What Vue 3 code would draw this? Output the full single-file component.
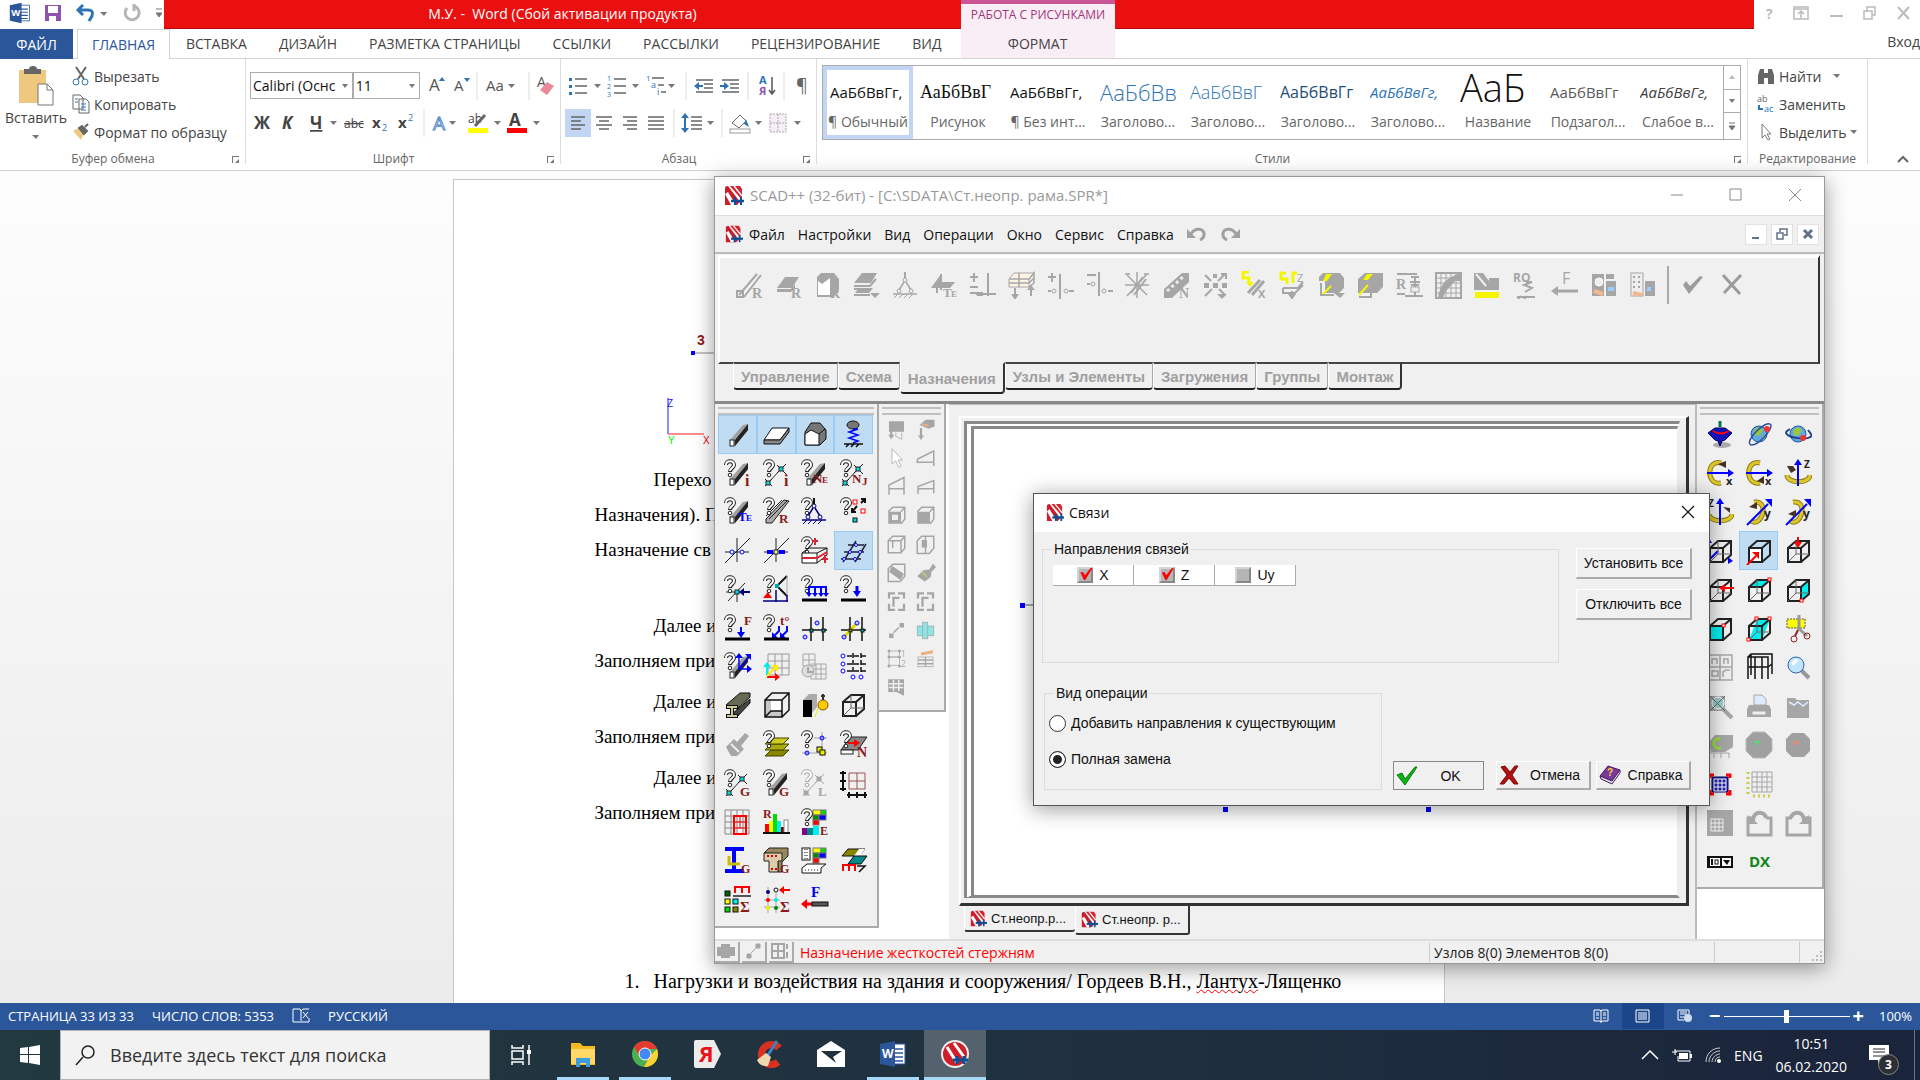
<script setup>
import { ref } from 'vue'

// small svg helpers, every icon is a string of svg shapes
const G = '#a6a6a6'
const B = '#0000ff'
const R = '#8b1a1a'
const line = (d, c = '#222', w = 1, extra = '') =>
  `<path d="${d}" fill="none" stroke="${c}" stroke-width="${w}" ${extra}/>`
const fill = (d, c, stroke = 'none') => `<path d="${d}" fill="${c}" stroke="${stroke}"/>`
const box = (x, y, w, h, c, stroke = 'none') =>
  `<rect x="${x}" y="${y}" width="${w}" height="${h}" fill="${c}" stroke="${stroke}"/>`
const dot = (x, y, r, c, stroke = 'none') =>
  `<circle cx="${x}" cy="${y}" r="${r}" fill="${c}" stroke="${stroke}"/>`
const txt = (s, x, y, c, size = 14, extra = '') =>
  `<text x="${x}" y="${y}" fill="${c}" font-size="${size}" ${extra}>${s}</text>`
const letter = (s, x = 17, y = 27, c = R, size = 13) =>
  txt(s, x, y, c, size, 'font-family="Liberation Serif, serif" font-weight="bold"')
const caret = (x, y = 12) => fill(`M${x - 3} ${y}h7l-3.5 4z`, '#777')

const ask = (c = '#222') =>
  line('M3 6c0-5 8-5 8 0 0 3-4 3-4 7', c, 4) +
  line('M3 6c0-5 8-5 8 0 0 3-4 3-4 6', '#fff', 2) +
  dot(7, 16, 1.8, '#fff', c)
const beam = (c = '#222') =>
  fill('M7 20L20 5l5-1v6L12 26H7z', c === G ? G : '#a0a0a0') +
  fill('M12 20L25 4v6L12 26z', c) +
  box(7, 20, 4, 6, '#fff', c)
const nodes = (c = '#222', f = '#00e0e0') =>
  line('M6 24L19 10M15 6l9 9M24 5l-9 9M3 20l7 7M10 20l-7 7', c) + box(17, 8, 4, 4, f, c) + box(4, 22, 4, 4, f, c)
const down = (x, y1, y2, c = B, w = 2) =>
  line(`M${x} ${y1}V${y2 - 3}`, c, w) + fill(`M${x - 4} ${y2 - 5}h8l-4 6z`, c)
const cube = (faces = '', c = '#222', hidden = true) =>
  faces + line('M4 11h13v14H4zM4 11l8-7h13v14l-8 7M17 11l8-7', c, 2) +
  (hidden ? line('M12 4v13h13M12 17l-8 8', '#666') : '')
const grid = (x, y, n, s, c) => {
  let d = ''
  for (let i = 0; i <= n; i++) {
    d += `M${x + i * s} ${y}v${n * s}M${x} ${y + i * s}h${n * s}`
  }
  return line(d, c)
}
const support = (c, d) =>
  line('M14 1v6', d, 2) + dot(14, 9, 2, '#eee', c) + line('M13 11l-5 8M15 11l5 8M2 23h24', c, 1.5) +
  dot(8, 20, 2, '#eee', c) + dot(20, 20, 2, '#eee', c) +
  line('M3 27l4-4M8 27l4-4M13 27l4-4M18 27l4-4', c)
const ground = line('M2 25h25', '#000', 3)
const blocks =
  box(13, 2, 8, 5, '#ff0', '#777') + box(21, 2, 5, 5, '#0d0', '#777') + box(13, 7, 6, 5, '#080', '#777') +
  box(19, 7, 7, 5, B, '#777') + box(13, 12, 6, 5, 'red', '#777')
const scad =
  fill('M1 3q0-2 3-2l12 16-3 3H1z', '#c91f2c') + fill('M6 1h10l2 3v11z', '#d8232f') +
  fill('M1 9l3-2 8 13H7z', '#fff') + line('M10 1l8 10', '#fff', 1.5) +
  line('M7 16h14', '#0c4f94', 2.5) + line('M11 12v8M17 12v8', '#0c4f94', 2)
const door = fill('M3 9h9v17H3z', '#000') + fill('M3 9l6-6h8l-5 6zM12 9l5-6v13l-5 6z', '#aaa')

const left = [
  beam(),
  fill('M2 20L10 8h17l-9 12z', '#fff', '#111') + fill('M2 20h16l9-12v4l-9 12H2z', '#888', '#111'),
  fill('M5 12l6-9h9l6 7v9l-6 6H5z', '#777', '#111') + fill('M5 14l6-4 8 4v11H5z', '#fff', '#111') + line('M19 14l6-5', '#111'),
  `<ellipse cx="14" cy="5" rx="6" ry="4" fill="#777" stroke="#111"/>` + line('M14 9h5l-9 3 9 3-9 3 9 3-5 2', B, 1.5) + line('M5 24h19M7 27l3-3M12 27l3-3M17 27l3-3', '#111', 1.5),
  beam() + ask() + letter('i', 22, 27, R, 16),
  nodes() + ask() + letter('i', 22, 27, R, 16),
  beam() + ask() + letter('N', 13, 24) + letter('E', 22, 24, R, 9),
  nodes() + ask() + letter('N', 13, 24) + letter('J', 23, 26, R, 11),
  beam() + ask() + letter('T', 15, 24, B) + letter('E', 23, 24, B, 9),
  fill('M4 22L22 3l5 1L10 26H4z', '#aaa', '#222') + line('M7 22L25 4M4 19L20 3', '#222') + ask() + letter('R', 17, 26),
  ask() + support('#000080', '#111'),
  ask() + box(14, 3, 4, 4, '#fff', 'red') + box(22, 12, 4, 4, '#fff', 'red') + box(14, 21, 4, 4, '#0dd', '#111') + line('M18 9l-5 6M22 6l4-4M13 11v4h4M22 2h4v4', '#111', 2),
  line('M2 27L27 2M14 2v24M2 16h24') + dot(9, 16, 2, '#fff', B) + dot(19, 16, 2, '#fff', B),
  line('M2 27L27 2M14 2v24M2 16h24') + box(5, 14, 6, 4, B) + box(17, 14, 6, 4, B) + box(12, 14, 4, 4, '#ff8', '#222'),
  ask() + fill('M2 17h15v10H2z', '#fff', '#111') + line('M2 17l7-5h18l-10 5M17 27l10-8v-7', '#111') + line('M2 22h15l10-6', '#d23', 2) + line('M15 2v7M12 5h6M25 19v8M22 23h6', '#d23', 2),
  line('M9 9h16M5 16h20M2 23h20M4 26L17 5M16 26L27 8', '#223', 1.5) + dot(17, 9, 1.5, '#fff', B) + dot(11, 16, 1.5, '#fff', B) + dot(21, 16, 1.5, '#fff', B) + dot(5, 23, 1.5, '#fff', B) + dot(16, 23, 1.5, '#fff', B),
  line('M3 17h14M5 26L22 8M14 18v9') + ask() + box(12, 15, 4, 4, '#0dd', '#222') + line('M19 17h8', '#000080', 2) + fill('M16 17l5-4v8z', '#000080'),
  line('M25 1L15 11l10 10', '#111', 2) + line('M25 1v20', G) + ask() + box(13, 9, 4, 4, '#0aa') + fill('M1 23h9l-4-6z', 'red') + line('M1 26h25M14 15v12M25 20v7', '#000080', 1.5),
  ask() + line('M9 19v-7h17v7M15 12v7M21 12v7', B, 2) + fill('M6 18h6l-3 4zM12 18h6l-3 4zM18 18h6l-3 4zM23 18h6l-3 4z', B) + ground,
  ask() + down(18, 11, 21, B, 3) + ground,
  ask() + letter('F', 21, 11) + down(18, 13, 23) + ground,
  ask() + letter('t°', 18, 11) + line('M17 12v5l-5 5M25 12v5l-5 5', B, 2) + fill('M10 18v6h6zM18 18v6h6z', B) + ground,
  line('M11 3v24M23 3v24M2 16h25', '#111', 1.5) + box(10, 15, 3, 3, '#0aa', '#111') + box(22, 15, 3, 3, '#0aa', '#111') + dot(5, 23, 2, '#ccf', B) + dot(17, 9, 2, '#ccf', B),
  line('M11 3v24M23 3v24M2 16h25', '#111', 1.5) + line('M5 23L18 9', '#dd0', 3) + box(10, 15, 3, 3, '#880', '#111') + box(22, 15, 3, 3, '#0aa', '#111') + dot(5, 23, 2, '#ccf', B) + dot(18, 9, 2, '#ccf', B),
  beam() + ask() + line('M16 4v13h10M16 17L27 4', B, 1.5) + fill('M12 6l4-5 4 5zM24 13l5 4-5 4zM22 2h6v6z', B),
  grid(6, 2, 3, 7, '#999') + line('M5 13v11', '#0ee', 2) + line('M5 25h9', 'red', 2) + line('M5 24l8-8', '#fe0', 2) + fill('M1 15l4-5 4 5z', '#0ee') + fill('M13 21l5 4-5 4z', 'red') + fill('M9 13h7v7z', '#fe0'),
  grid(3, 2, 2, 6, G) + grid(11, 12, 3, 5, G) + dot(8, 19, 6, '#ddd', G) + line('M8 15v5h5', G, 2),
  line('M8 4h20M8 12h20M8 19h20M14 1v20M22 1v20', '#111', 1.5, 'stroke-dasharray="5 2"') + dot(4, 4, 2, '#fff', B) + dot(4, 12, 2, '#fff', B) + dot(4, 19, 2, '#fff', B) + dot(14, 25, 2, '#fff', B) + dot(22, 25, 2, '#fff', B),
  fill('M3 14L17 2h10v4L14 18z', '#666a55', '#111') + fill('M10 22l17-14v4L14 26z', '#444', '#111') + line('M3 16h12M3 25h12M9 16v9', '#111', 4) + line('M4 16h10M4 25h10M9 16v9', '#cc9', 2),
  fill('M3 9h17v17H3z', '#c8c8c8') + fill('M9 9h11v11H9z', '#fff') + line('M3 9h17v17H3zM3 9l7-7h17v17l-7 7M20 9l7-7M3 26l6-6h11', '#111', 1.5),
  door + line('M20 12l-5 14', '#ee0') + dot(23, 14, 5, '#fc0', '#850') + line('M23 3v6M21 5h4', '#333', 2),
  cube(),
  fill('M3 17l8-8 3 3 8-9 4 3-8 10 3 3-7 7H8z', G) + line('M8 14l8 8', '#eee', 2),
  fill('M3 26l6-6h18l-6 6z', '#880', '#440') + fill('M3 20l6-6h18l-6 6z', '#aa1', '#440') + fill('M3 14l6-6h18l-6 6z', '#cc2', '#440') + ask(),
  ask() + line('M22 2v24M2 23h25M14 8h13', G) + dot(22, 8, 2, '#99f', B) + dot(7, 23, 2, '#99f', B) + box(17, 17, 5, 5, '#ee0', '#111') + box(20, 20, 5, 5, '#ee0', '#111'),
  fill('M2 20L11 7h17l-9 13z', '#888', '#222') + box(2, 20, 12, 4, '#fff', '#222') + ask() + line('M9 13h7', 'red', 2) + fill('M15 9l6 4-6 4z', 'red') + letter('N', 18, 27, R, 14),
  nodes() + ask() + letter('G'),
  beam() + ask() + letter('G'),
  nodes(G, G) + ask(G) + letter('L', 18, 27, G),
  grid(10, 4, 2, 8, '#955') + line('M4 2v20M1 4h6M1 12h6M1 20h6M8 26h20M10 23v6M18 23v6M26 23v6', '#111', 2),
  grid(2, 2, 4, 6, '#888') + grid(11, 8, 2, 6, 'red') + line('M11 8h12v18H11z', 'red', 2),
  letter('R', 1, 10, R, 12) + box(3, 16, 4, 9, 'red') + box(7, 13, 4, 12, '#ff0') + box(11, 6, 4, 19, '#0d0') + box(15, 13, 4, 12, '#0ee') + box(19, 19, 3, 6, '#800') + box(22, 12, 4, 13, '#fff', '#888') + line('M1 25h27', '#111', 2),
  blocks + ask() + box(2, 20, 5, 7, '#808') + box(7, 20, 6, 7, '#088') + box(13, 18, 6, 9, '#0ee') + letter('E', 20, 27, R, 12),
  '',
  line('M2 3h19M11 3v22M2 25h19', B, 4) + line('M6 10v8h11', '#cb0', 3) + letter('G', 18, 27, R, 12),
  fill('M2 7l5-5h19v8l-6 6v10h-4V8z', '#99885c', '#222') + fill('M2 7h18v8h-4v11H7V15H2z', '#dca', '#222') + line('M5 10h12M9 23h6', '#d00', 2, 'stroke-dasharray="2 2"') + letter('G', 18, 27, R, 12),
  box(2, 2, 8, 12, '#fff', '#111') + line('M5 3v11M7 3v11', '#111', 1, 'stroke-dasharray="1 2"') + blocks + fill('M2 22l5-4h19l-5 4v5H2z', '#fff', '#111') + line('M5 24h14', '#111', 1, 'stroke-dasharray="1 2"'),
  fill('M3 10l6-7h17l-6 7z', '#880', '#111') + fill('M15 10l5-7h6l-5 7z', '#fff') + fill('M9 18l6-8h13l-6 8z', '#088', '#111') + line('M4 25v-6h12v6M10 19v6', 'red', 2) + line('M18 20h8l-6 6', '#111', 1.5),
  box(2, 6, 5, 5, '#060', '#111') + box(2, 14, 5, 5, '#ff0', '#111') + box(10, 14, 5, 5, '#0ee', '#111') + box(2, 22, 5, 5, '#0d0', '#111') + box(10, 22, 5, 5, '#880', '#111') + line('M12 8V2h14v6M19 2v6', 'red', 2) + line('M10 11h18', '#555', 2) + letter('Σ', 17, 27, R, 15),
  line('M6 2v26M14 8v20M2 15h16M2 22h16', G) + dot(6, 7, 2, '#008') + dot(14, 5, 2, '#fff', '#111') + dot(6, 15, 2, 'red') + dot(14, 15, 2, '#0ee') + dot(6, 23, 2, '#ee0') + dot(14, 23, 2, '#080') + line('M21 5h7', 'red', 2) + fill('M17 5l5-4v8z', 'red') + letter('Σ', 18, 27, R, 15),
  letter('F', 11, 12, B, 15) + line('M6 19h6', 'red', 3) + fill('M1 19l6-5v10z', 'red') + box(12, 17, 16, 4, '#555', '#111'),
  ''
]
const leftActive = [0, 1, 2, 3, 15]

const middle = [
  box(4, 3, 20, 14, G) + down(7, 15, 26, G, 3) + line('M13 18v5l8 4v-9', G),
  fill('M6 8l8-7h12v9l-8 3z', G) + line('M9 7l9 2', '#e8b080', 3) + down(8, 12, 27, G, 3),
  fill('M8 1v20l5-4 4 9 3-2-4-8h6z', '#fff', G),
  line('M3 15L25 4v20M3 15v4h21', G, 2),
  line('M4 25V12L24 2v23M4 17h20', G, 2),
  line('M4 24V14L25 6v17M4 17h20', G, 2),
  fill('M3 9h17v16H3z', G) + box(8, 13, 8, 7, '#eee') + line('M3 9l6-6h16v16l-5 6M20 9l5-6', G, 2),
  fill('M3 9h17v16H3z', G) + line('M3 9l6-6h16v16l-5 6M20 9l5-6', G, 2),
  line('M3 9h17v16H3zM3 9l6-6h16v16l-5 6M20 9l5-6M9 9v10', G, 2),
  line('M3 9l6-6h16v16l-6 7H3zM14 3v22', G, 2) + fill('M9 8h7v10H9z', G),
  line('M3 9l6-6h16v16l-6 7H3z', G, 2) + fill('M8 5l16 11-5 8L4 13z', G),
  fill('M3 19l8-8 8-1 5-8 4 5-6 6-1 7-8 6z', G) + line('M9 13l7 7', '#cc7', 2),
  line('M4 10V3h8M16 3h8v7M4 17v8h8M24 17v8h-8', G, 3) + line('M10 21V9h8', G, 3),
  line('M4 10V3h8M16 3h8v7M4 17v8h8M24 17v8h-8', G, 3) + line('M10 21V9h8', G, 3),
  box(4, 18, 6, 6, G) + box(18, 4, 6, 6, G) + line('M10 17l7-7', G, 2),
  box(3, 8, 22, 13, '#8de4e4', G) + box(10, 3, 7, 22, '#8de4e4', G),
  box(4, 4, 14, 8, 'none', G) + box(4, 12, 14, 11, 'none', G) + dot(4, 4, 2, G) + dot(18, 4, 2, G) + dot(4, 12, 2, G) + dot(18, 12, 2, G) + dot(4, 24, 2, G) + dot(18, 24, 2, G) + txt('1', 20, 12, G, 11) + txt('2', 20, 25, G, 11),
  box(4, 12, 20, 13, 'none', G) + line('M4 16h20M4 21h20M14 12v13', G, 2) + line('M8 8l16-3', '#e8b080', 4),
  box(3, 3, 21, 17, G) + line('M4 9h19M4 14h19M10 4v15M17 4v15', '#eee', 2) + fill('M12 19h12v6z', G),
  ''
]

const globe = dot(14, 14, 8, '#5ea8e8', '#2456a0') + fill('M9 10l5-3 4 3-3 5-5 1zM17 16l4-2-2 6z', '#9bc53d')
const axis = (ring, shaft, mark, arrow) =>
  line(ring, '#8d7c10', 5) + line(ring, '#dcc62c', 3) + line(shaft, B, 2) + mark + fill(arrow, '#432')
const right = [
  `<ellipse cx="16" cy="25" rx="9" ry="3" fill="#aaa"/>` + line('M14 1v6', '#075', 3) + fill('M2 13l7-5h10l7 5-7 7-3 1-2 5-2-5-3-1z', '#11b', '#005') + line('M7 11c5 3 11 3 16 0', 'red', 2),
  globe + line('M6 25C-2 22 22-2 26 5c1 5-13 21-20 20', '#2d4f9c', 1.5) + dot(22, 9, 3, '#e33'),
  globe + line('M3 11c-7 7 29 11 24 3M3 11l3-2M27 14l-3-4', '#1f3f8c', 2) + dot(19, 18, 3, '#e33'),
  axis('M15 4C0 0 0 27 15 24', 'M1 14h22', txt('x', 20, 26, '#222', 11, 'font-weight="bold"'), 'M12 5l8-3v7z') + fill('M22 10l6 4-6 4z', B),
  axis('M15 4C0 0 0 27 15 24', 'M1 14h22', txt('x', 20, 26, '#222', 11, 'font-weight="bold"'), 'M12 22l7-5v8z') + fill('M22 10l6 4-6 4z', B),
  axis('M3 16c0 9 23 9 23 0', 'M14 27V5', txt('Z', 20, 9, '#222', 10, 'font-weight="bold"'), 'M3 7h6l3 4-5 3z') + fill('M10 6l4-6 4 6z', B),
  axis('M3 16c0 9 23 9 23 0', 'M14 27V5', txt('Z', 2, 9, '#222', 10, 'font-weight="bold"'), 'M17 9l7 1v5z') + fill('M10 6l4-6 4 6z', B),
  axis('M9 4c16-2 8 26-3 19', 'M2 27L23 6', txt('y', 19, 20, '#222', 12, 'font-weight="bold"'), 'M4 9l8-5v7z') + fill('M20 1h7v8z', B),
  axis('M9 4c16-2 8 26-3 19', 'M2 27L23 6', txt('y', 19, 20, '#222', 12, 'font-weight="bold"'), 'M4 16l8-4v7z') + fill('M20 1h7v8z', B),
  cube(line('M2 24L12 14M1 5v6', B, 2)) + fill('M22 20l5 4-5 3zM0 6l3-5 3 5z', B),
  cube(box(4, 11, 13, 14, '#fff'), '#222', false) + line('M2 28l9-9', 'red', 2) + fill('M7 15h7v7z', 'red'),
  cube() + down(14, 0, 10, 'red'),
  cube() + line('M17 12h11', 'red', 2) + fill('M13 12l6-4v8z', 'red'),
  cube(fill('M4 11l8-7h13l-8 7z', '#0ee')) + box(23, 2, 3, 3, '#fff', 'red'),
  cube(fill('M17 11l8-7v14l-8 7z', '#0ee')) + box(16, 23, 3, 3, '#fff', 'red'),
  cube(box(4, 11, 13, 14, '#0ee'), '#222', false) + box(16, 9, 3, 3, '#fff', 'red'),
  cube(fill('M4 25l8-21h13l-8 21z', '#0ee')) + box(2, 23, 3, 3, '#fff', 'red') + box(10, 2, 3, 3, '#fff', 'red') + box(23, 2, 3, 3, '#fff', 'red'),
  box(3, 4, 18, 9, '#ff0') + line('M3 4h18v9H3z', '#555', 1, 'stroke-dasharray="2 1"') + line('M15 0v15M13 12l10 9', '#999', 3) + line('M14 15l-3 6', '#822', 2) + dot(10, 24, 3, 'none', '#822') + dot(23, 21, 3, 'none', '#822'),
  line('M2 2h24v25H2zM14 2v25M2 14h24M6 11V6h5v5M18 11V6h4v5M6 18h6v5H6zM17 24v-5l3-2h4', G, 1.5),
  line('M3 26V4h20v22M10 26V4M17 26V4M3 14h20M3 4l3-3h21v20M6 2v20M23 14l4-3', '#111', 1.5),
  line('M17 17l8 8', '#999', 4) + dot(12, 12, 8, '#bfe4ff', '#36a') + fill('M7 10l4-4 4 1-6 6z', '#fff'),
  line('M17 17l9 9', G, 4) + box(4, 4, 15, 15, G) + dot(12, 11, 6, '#9cc', '#fff') + line('M4 4l15 15M19 4L4 19', '#666'),
  fill('M4 13h20l2 4v8H2v-8z', G) + fill('M9 13V3h8l4 4v6z', '#dfeaff', G) + box(7, 19, 14, 4, '#eee', G),
  fill('M3 6h8l2 2h12v18H3z', G) + line('M5 10l5 3 4-3 5 4 5-4', '#dfeaff', 1.5),
  fill('M2 12l7-8h18v12l-8 5H5z', G) + line('M14 8c-8-2-9 11 1 9', '#9d4', 3) + line('M2 27v-5h6v5M8 22h7v5M15 22h8v5', G),
  '<path d="M8 1h12l7 7v12l-7 7H8l-7-7V8z" fill="#a0a0a0" stroke="#bbb"/>' + line('M11 14v-3h4', '#5d6', 2),
  '<path d="M8 2h12l6 6v12l-6 6H8l-6-6V8z" fill="#a0a0a0"/>' + line('M11 14v-3h4', '#e86', 2),
  box(6, 7, 16, 15, '#22a', '#000060') + grid(8, 9, 3, 4, '#fff') + line('M4 8V5h4M20 5h4v3M4 20v4h4M20 24h4v-4', 'red', 3),
  grid(7, 2, 4, 5, G) + line('M3 2v22M8 26h20', '#cc4', 3, 'stroke-dasharray="2 3"'),
  '',
  box(1, 1, 26, 26, G) + grid(5, 10, 3, 4, '#eee'),
  line('M9 9H3v17h23V9h-5', G, 3) + line('M8 12c0-11 12-10 13-3', G, 4) + fill('M3 6v9h10z', G),
  line('M8 9H3v17h23V9h-5', G, 3) + line('M7 9c1-7 13-8 13 3', G, 4) + fill('M25 6v9H15z', G),
  box(1, 8, 26, 12, '#111') + box(4, 10, 10, 8, '#fff') + box(16, 10, 9, 8, '#fff') + line('M6 11v6', '#111', 2) + box(9, 12, 3, 4, '#fff', '#111') + fill('M17 12h7l-3 5z', '#111'),
  txt('DX', 4, 19, '#0d8517', 15, 'font-weight="bold"'),
  ''
]

const tools = [
  line('M4 24L22 3M9 26L26 4M2 20h6v6H2z', G, 2) + letter('R', 17, 27, G, 14),
  fill('M3 17l8-11h14l-7 11z', G) + fill('M3 18h14l4-5v4l-4 4H3z', G) + letter('R', 17, 27, G, 14),
  fill('M4 6l4-4h13l5 6v10l-5 8H4z', G) + fill('M5 10l4 3 8-6v17H5z', '#fff') + letter('R', 17, 27, G, 14),
  fill('M2 12L10 2h15l-6 10z', G) + line('M2 15h16l6-7M2 18h16M2 24h16', G, 2) + fill('M3 22l4-5h14l-4 5zM18 22h10l-5 5z', G),
  support(G, G),
  fill('M2 17l10-14v8h14l-5 6z', G) + line('M12 3v16M8 10v12', G, 2) + letter('T', 14, 26, G, 13) + letter('E', 22, 26, G, 9),
  line('M2 6h8M6 2v9M2 16h8M20 2v23M8 23h20M2 22h8', G, 2) + box(9, 21, 6, 4, G),
  fill('M2 8l5-6h20l-5 6v8H2z', '#fdf3e4', G) + line('M2 8h20l5-6v10l-5 4M2 12h20l5-5M12 2v14', G, 1.5) + down(8, 17, 28, G) + line('M24 25v-9', G, 2) + fill('M20 19h8l-4-5z', G),
  line('M2 6h8M6 2v9M14 3v25M2 20h3M23 20h5', G, 2) + dot(8, 20, 2, '#eee', G) + dot(20, 20, 2, '#eee', G),
  line('M2 4h9M14 1v24M2 13h3M23 20h5', G, 2) + dot(8, 13, 2, '#eee', G) + dot(19, 20, 2, '#eee', G),
  line('M4 25L24 3M14 1v26M2 14h24M4 4l20 20M2 3h5M21 3h5', G, 1.5) + line('M8 22L20 6M11 24L23 8', G, 2),
  fill('M2 18L20 2h7v9L10 27H2z', G) + line('M5 20L22 5', '#eee', 3, 'stroke-dasharray="3 3"') + letter('N', 17, 27, G, 14),
  box(3, 12, 5, 5, G) + box(12, 12, 5, 5, G) + box(21, 12, 5, 5, G) + box(12, 3, 4, 4, G) + line('M4 4l6 6M24 3l-7 7M4 25l7-7M18 18l6 6M20 3h5v5', G, 2) + fill('M16 23h10l-5 5z', G),
  line('M9 1H3v6h6v5', '#f5f500', 3) + fill('M6 11h8l-4 5z', '#f5f500') + line('M8 22L20 9M12 24L24 10', G, 3) + txt('X', 18, 27, G, 11, 'font-weight="bold"'),
  line('M8 2H3v6h6v5M15 12V2h4', '#f5f500', 3) + txt('Z', 19, 11, G, 11) + line('M5 17h15l5-6M5 17v5h12l8-8', G, 2) + down(14, 20, 28, G),
  fill('M2 6l4-4h17l4 5v10l-5 5H8V10H2z', G) + fill('M9 3h6l-5 7H6z', '#f5f500') + line('M6 23l8-8', '#f5f500', 2) + line('M4 12v12h13', G, 2) + fill('M17 22h11l-5 5z', G),
  fill('M2 8l7-6h18v14l-6 6H2z', G) + fill('M11 3h6l-5 6H7z', '#f5f500') + line('M3 24l9-10', '#f5f500', 2) + line('M3 26h12v-5', G, 2),
  letter('R', 1, 18, G, 14) + line('M2 3h20M2 23h8M16 6h8M16 14h8M15 11h10M20 5v20M10 25h18', G, 2) + box(16, 16, 8, 5, '#eee', G),
  line('M2 2h25v25H2z', G, 2) + grid(2, 2, 5, 5, G) + fill('M27 2v8h-6l-9 10-3 7H4c2-14 9-21 23-25z', G),
  fill('M2 2h9l6 8V7h10v12H2z', G) + line('M4 3l10 12', '#eee', 2) + box(3, 21, 24, 6, '#f5f500'),
  txt('RO', 2, 11, G, 12, 'font-weight="bold"') + line('M15 11h6l-8 3 8 3-7 4M6 26h18M7 28l3-3M13 28l3-3', G, 2),
  txt('F', 12, 13, G, 16) + line('M6 20h22', G, 3) + fill('M1 20l7-5v10z', G),
  box(3, 3, 12, 22, G) + box(17, 3, 8, 5, G) + box(17, 10, 10, 15, G) + dot(10, 11, 4, '#eee', '#fff') + line('M5 20l9 3', '#f3b98c', 4) + box(19, 16, 6, 4, '#9cf'),
  box(3, 2, 12, 23, '#eee', G) + line('M6 5v14M11 5v14', G, 2, 'stroke-dasharray="2 3"') + box(17, 10, 10, 15, G) + line('M5 22l9 2', '#f3b98c', 4) + box(19, 16, 4, 4, '#9cf')
]

const ribbonTabs = ['ВСТАВКА', 'ДИЗАЙН', 'РАЗМЕТКА СТРАНИЦЫ', 'ССЫЛКИ', 'РАССЫЛКИ', 'РЕЦЕНЗИРОВАНИЕ', 'ВИД']
const sep = line('M5 0v28', '#dcdcdc')
const lines = (x, d, c = '#666') => line(d.map(([dx, y, w]) => `M${x + dx} ${y}h${w}`).join(''), c, 1.5)

const fontRow1 = [
  [26, txt('A', 9, 19, '#555', 17) + fill('M19 9h6l-3-4z', '#2e74b5')],
  [26, txt('A', 8, 19, '#555', 15) + fill('M18 6h6l-3 4z', '#2e74b5')],
  [10, sep],
  [42, txt('Aa', 4, 19, '#555', 15) + caret(29)],
  [10, sep],
  [26, txt('A', 3, 15, '#555', 14) + fill('M6 18l7-8 7 4-7 9z', '#e98a9a')]
]
const fontRow2 = [
  [26, txt('Ж', 4, 20, '#444', 17, 'font-weight="bold"')],
  [26, txt('К', 6, 20, '#444', 17, 'font-weight="bold" font-style="italic"')],
  [40, txt('Ч', 8, 20, '#444', 17, 'font-weight="bold" text-decoration="underline"') + caret(31)],
  [26, txt('abc', 2, 19, '#444', 12, 'text-decoration="line-through"')],
  [28, txt('x', 4, 19, '#444', 15, 'font-weight="bold"') + txt('2', 14, 22, '#2e74b5', 9)],
  [23, txt('x', 2, 19, '#444', 15, 'font-weight="bold"') + txt('2', 12, 12, '#2e74b5', 9)],
  [10, sep],
  [36, txt('A', 4, 21, '#fff', 19, 'stroke="#4a86cf"') + caret(23)],
  [40, txt('ab', 3, 14, '#444', 12) + line('M10 17L20 6', '#666', 3) + box(3, 19, 20, 5, '#ff0') + caret(32)],
  [42, txt('A', 4, 17, '#444', 17, 'font-weight="bold"') + box(2, 19, 20, 5, 'red') + caret(31)]
]
const bul = y => box(4, y - 1, 3, 3, '#2e74b5')
const paraRow1 = [
  [39, bul(7) + bul(14) + bul(21) + lines(0, [[10, 7, 12], [10, 14, 12], [10, 21, 12]]) + caret(32)],
  [39, txt('1', 3, 9, '#2e74b5', 7) + txt('2', 3, 17, '#2e74b5', 7) + txt('3', 3, 25, '#2e74b5', 7) + lines(0, [[10, 7, 12], [10, 14, 12], [10, 21, 12]]) + caret(31)],
  [38, txt('1', 3, 9, '#2e74b5', 8) + txt('a', 8, 16, '#2e74b5', 9) + txt('i', 14, 23, '#2e74b5', 9) + lines(0, [[9, 6, 12], [15, 13, 6], [18, 20, 5]]) + caret(28)],
  [10, sep],
  [26, lines(0, [[5, 8, 17], [13, 12, 9], [13, 16, 9], [5, 20, 17]]) + line('M6 14h6', '#2e74b5', 2) + fill('M3 14l5-4v8z', '#2e74b5')],
  [26, lines(0, [[5, 8, 17], [13, 12, 9], [13, 16, 9], [5, 20, 17]]) + line('M3 14h6', '#2e74b5', 2) + fill('M12 14l-5-4v8z', '#2e74b5')],
  [10, sep],
  [26, txt('А', 6, 12, '#2e74b5', 11, 'font-weight="bold"') + txt('Я', 6, 23, '#8d53ad', 11, 'font-weight="bold"') + line('M19 5v16M16 18l3 4 3-4', '#555', 1.5)],
  [10, sep],
  [26, txt('¶', 7, 20, '#666', 18)]
]
const paraRow2 = [
  [26, lines(0, [[6, 8, 14], [6, 12, 10], [6, 16, 14], [6, 20, 10]]), true],
  [26, lines(0, [[5, 8, 16], [8, 12, 10], [5, 16, 16], [8, 20, 10]])],
  [26, lines(0, [[6, 8, 14], [10, 12, 10], [6, 16, 14], [10, 20, 10]])],
  [26, lines(0, [[5, 8, 16], [5, 12, 16], [5, 16, 16], [5, 20, 16]])],
  [10, sep],
  [38, lines(0, [[12, 8, 11], [12, 12, 11], [12, 16, 11], [12, 20, 11]]) + line('M6 8v12', '#2e74b5', 2) + fill('M2 9h8L6 4zM2 19h8l-4 5z', '#2e74b5') + caret(31)],
  [10, sep],
  [39, fill('M5 14l8-8 6 6-7 7z', '#fff', '#666') + fill('M19 10l3 8-5-3z', '#2e74b5') + box(3, 20, 20, 4, '#fff', '#999') + caret(31)],
  [38, box(4, 5, 16, 18, '#f7eef8') + line('M4 5h16v18H4zM12 5v18M4 14h16', '#aaa', 1, 'stroke-dasharray="2 1"') + caret(31)]
]

const styles = [
  { s: 'АаБбВвГг,', n: '¶ Обычный', c: 'body' },
  { s: 'АаБбВвГ', n: 'Рисунок', c: 'serif' },
  { s: 'АаБбВвГг,', n: '¶ Без инт...', c: 'body' },
  { s: 'АаБбВв', n: 'Заголово...', c: 'h1' },
  { s: 'АаБбВвГ', n: 'Заголово...', c: 'h2' },
  { s: 'АаБбВвГг', n: 'Заголово...', c: 'h3' },
  { s: 'АаБбВвГг,', n: 'Заголово...', c: 'h4' },
  { s: 'АаБ', n: 'Название', c: 'title' },
  { s: 'АаБбВвГг', n: 'Подзагол...', c: 'sub' },
  { s: 'АаБбВвГг,', n: 'Слабое в...', c: 'weak' }
]

const paragraphs = [
  { t: 'Перехо', c: 'indent' },
  { t: 'Назначения). П', c: '' },
  { t: 'Назначение св', c: 'wide' },
  { t: 'Далее и', c: 'indent' },
  { t: 'Заполняем при', c: 'after' },
  { t: 'Далее и', c: 'indent' },
  { t: 'Заполняем при', c: 'after' },
  { t: 'Далее и', c: 'indent' },
  { t: 'Заполняем при', c: '' }
]

const menu = ['Файл', 'Настройки', 'Вид', 'Операции', 'Окно', 'Сервис', 'Справка']
const scadTabs = ['Управление', 'Схема', 'Назначения', 'Узлы и Элементы', 'Загружения', 'Группы', 'Монтаж']
const tab = ref('Назначения')
const links = ref([
  { n: 'X', on: true },
  { n: 'Z', on: true },
  { n: 'Uy', on: false }
])
const mode = ref('replace')
const zoom = ref(100)

function setAll(on) {
  links.value.forEach(l => (l.on = on))
}

const word = box(12, 4, 14, 20, '#fff', '#2b579a') + line('M15 9h9M15 13h9M15 17h9M15 21h9', '#2b579a', 1.5) + fill('M1 4l15-3v26L1 24z', '#2b579a') + txt('W', 3, 18, '#fff', 12, 'font-weight="bold"')
const apps = [
  { i: fill('M2 3h9l3 3h12v19H2z', '#f5b921') + box(2, 9, 24, 15, '#ffd866') + fill('M7 27v-9h14v9h-4v-4h-6v4z', '#3d9be0'), on: 'on' },
  { i: dot(14, 14, 13, '#4caf50') + fill('M26 9A13 13 0 0 1 13 27l6-11z', '#fdd131') + fill('M3 7l6 10 5-8h12A13 13 0 0 0 3 7z', '#e33b2e') + dot(14, 14, 6, '#4587f3', '#fff'), on: 'on' },
  { i: fill('M1 2Q1 0 3 0h18l7 14-7 14H3q-2 0-2-2z', '#ececec') + txt('Я', 6, 22, '#e8131b', 22, 'font-weight="bold"') },
  { i: line('M24 8A10 10 0 1 0 23 22', '#d9301f', 7) + line('M22 1l-9 14', '#3b82c4', 3) + fill('M2 20l9-7 5 4-3 9q-8 1-11-6z', '#f0d9b0') },
  { i: fill('M0 10L14 1l14 9v17H0z', '#fff') + fill('M4 11h21l-9 6 3 6z', '#22313c') },
  { i: word, on: 'on' },
  { i: dot(14, 14, 14, '#eee') + dot(14, 14, 12, '#cf1f2b') + line('M6 7l10 16M13 3l10 14', '#fff', 3) + line('M12 20h15M16 16v8M23 16v8', '#0c4f94', 3), on: 'on active' }
]
</script>

<template>
  <div class="screen">
    <header class="caption">
      <div class="quick">
        <svg width="22" height="22" viewBox="0 0 28 28" v-html="word"></svg>
        <svg width="18" height="18" viewBox="0 0 18 18"><path d="M1 1h16v16H1z" fill="#8d53ad" /><path d="M4 2h10v7H4zM5 12h7v5H5z" fill="#fff" /></svg>
        <svg width="34" height="20" viewBox="0 0 34 20">
          <path d="M3 7h10q6 0 4 6l-3 5M8 2L3 7l5 5" fill="none" stroke="#2e74b5" stroke-width="3" />
          <path d="M25 9h7l-3 4z" fill="#777" />
        </svg>
        <svg width="20" height="20" viewBox="0 0 20 20"><path d="M12 3a7 7 0 1 1-7 2M12 1v7" fill="none" stroke="#b5b5b5" stroke-width="3" /></svg>
        <svg width="8" height="12" viewBox="0 0 8 12"><path d="M1 2h6M1 6h6l-3 4z" fill="#777" stroke="#777" /></svg>
      </div>
      <div class="red">М.У. -&nbsp; Word (Сбой активации продукта)</div>
      <div class="picture-tools">РАБОТА С РИСУНКАМИ</div>
      <div class="red rest"></div>
      <div class="word-buttons">
        <b>?</b>
        <svg width="16" height="14" viewBox="0 0 16 14"><path d="M1 1h14v12H1zM1 3h14M8 12V5M5 8l3-3 3 3" fill="none" stroke="#bbb" stroke-width="1.5" /></svg>
        <svg width="13" height="14" viewBox="0 0 13 14"><path d="M0 10h13" stroke="#bbb" stroke-width="2" /></svg>
        <svg width="13" height="14" viewBox="0 0 13 14"><path d="M1 5h8v8H1zM4 5V1h8v8H9" fill="none" stroke="#bbb" stroke-width="1.5" /></svg>
        <svg width="13" height="14" viewBox="0 0 13 14"><path d="M1 1l11 12M12 1L1 13" stroke="#bbb" stroke-width="2" /></svg>
      </div>
    </header>

    <nav class="ribbon-tabs">
      <button class="file">ФАЙЛ</button>
      <button class="current">ГЛАВНАЯ</button>
      <button v-for="t in ribbonTabs" :key="t">{{ t }}</button>
      <button class="format">ФОРМАТ</button>
      <a href="#" class="signin">Вход</a>
    </nav>

    <section class="ribbon">
      <div class="group clipboard">
        <div class="body">
          <button class="paste">
            <svg width="36" height="40" viewBox="0 0 36 40">
              <path d="M1 4h27v33H1z" fill="#edc87e" />
              <path d="M6 3h5q0-3 4-3t4 3h4v5H6z" fill="#666" />
              <path d="M20 18h9l6 6v15H20zM29 18v6h6" fill="#fff" stroke="#777" />
            </svg>
            Вставить
            <svg width="8" height="12" viewBox="0 0 8 12"><path d="M0 5h7l-3 4z" fill="#777" /></svg>
          </button>
          <div class="clip-list">
            <button>
              <svg width="18" height="20" viewBox="0 0 18 20"><path d="M4 1l8 12M14 1L6 13" stroke="#666" stroke-width="2" /><circle cx="4" cy="16" r="3" fill="none" stroke="#2e74b5" /><circle cx="13" cy="16" r="3" fill="none" stroke="#2e74b5" /></svg>
              Вырезать
            </button>
            <button>
              <svg width="18" height="20" viewBox="0 0 18 20"><path d="M1 1h7l3 3v11H1zM7 5h7l3 3v11H7z" fill="#fff" stroke="#666" /><path d="M3 5h3M3 8h3M9 10h5M9 13h5M9 16h5" stroke="#2e74b5" /></svg>
              Копировать
            </button>
            <button>
              <svg width="18" height="20" viewBox="0 0 18 20"><path d="M1 9l6-3 5 5-3 7z" fill="#edc87e" /><path d="M7 6l3-2 5 5-3 3zM13 5l3-3" fill="#666" stroke="#666" stroke-width="2" /></svg>
              Формат по образцу
            </button>
          </div>
        </div>
        <footer>Буфер обмена<i class="launch"></i></footer>
      </div>

      <div class="group font">
        <div class="body rows">
          <div class="row">
            <label class="combo face"><select><option>Calibri (Оснс</option></select></label>
            <label class="combo size"><select><option>11</option></select></label>
            <button v-for="(b, i) in fontRow1" :key="i"><svg :width="b[0]" height="28" v-html="b[1]"></svg></button>
          </div>
          <div class="row">
            <button v-for="(b, i) in fontRow2" :key="i"><svg :width="b[0]" height="28" v-html="b[1]"></svg></button>
          </div>
        </div>
        <footer>Шрифт<i class="launch"></i></footer>
      </div>

      <div class="group para">
        <div class="body rows">
          <div class="row">
            <button v-for="(b, i) in paraRow1" :key="i"><svg :width="b[0]" height="28" v-html="b[1]"></svg></button>
          </div>
          <div class="row">
            <button v-for="(b, i) in paraRow2" :key="i" :class="{ pressed: b[2] }"><svg :width="b[0]" height="28" v-html="b[1]"></svg></button>
          </div>
        </div>
        <footer>Абзац<i class="launch"></i></footer>
      </div>

      <div class="group styles">
        <div class="body">
          <div class="gallery">
            <button v-for="(s, i) in styles" :key="i" :class="{ chosen: i == 0 }">
              <span class="sample" :class="'s-' + s.c">{{ s.s }}</span>
              <span class="style-name">{{ s.n }}</span>
            </button>
            <div class="scroll">
              <span><svg width="8" height="6"><path d="M1 5h6L4 1z" fill="#bbb" /></svg></span>
              <span><svg width="8" height="6"><path d="M1 1h6L4 5z" fill="#777" /></svg></span>
              <span><svg width="8" height="9"><path d="M1 1h6M1 4h6L4 8z" fill="#777" stroke="#777" /></svg></span>
            </div>
          </div>
        </div>
        <footer>Стили<i class="launch"></i></footer>
      </div>

      <div class="group edit">
        <div class="body clip-list">
          <button>
            <svg width="18" height="18" viewBox="0 0 18 18"><path d="M1 8l2-6h4v4h4V2h4l2 6v9h-6v-6H7v6H1z" fill="#666" /></svg>
            Найти
            <svg width="14" height="10"><path d="M7 3h7l-3 4z" fill="#777" /></svg>
          </button>
          <button>
            <svg class="replace" width="18" height="20" viewBox="0 0 18 20"><text x="0" y="8" font-size="9" fill="#666">ab</text><text x="7" y="18" font-size="9" fill="#2e74b5">ac</text><path d="M2 11v4h4" fill="none" stroke="#2e74b5" stroke-width="2" /></svg>
            Заменить
          </button>
          <button>
            <svg width="18" height="18" viewBox="0 0 18 18"><path d="M5 1v14l3-3 3 5 2-1-3-5h4z" fill="#fff" stroke="#777" /></svg>
            Выделить
            <svg width="8" height="10"><path d="M0 3h7l-3 4z" fill="#777" /></svg>
          </button>
        </div>
        <footer>Редактирование</footer>
      </div>
      <svg class="collapse" width="12" height="8"><path d="M1 7l5-5 5 5" fill="none" stroke="#666" stroke-width="2" /></svg>
    </section>

    <main class="document">
      <article class="page">
        <svg class="scheme" width="142" height="120">
          <text x="1" y="13" fill="#8b1a1a" font-size="14" font-weight="bold">3</text>
          <path d="M-3 21h60" stroke="#888" /><path d="M-5 19h4v4h-4z" fill="#00f" />
        </svg>
        <svg class="axes" width="50" height="52">
          <path d="M4 3v36" stroke="#66f" stroke-width="1.5" /><path d="M4 39h36" stroke="#f66" stroke-width="1.5" />
          <text x="3" y="12" fill="#22f" font-size="10">Z</text><text x="4" y="49" fill="#0e0" font-size="10">Y</text><text x="39" y="49" fill="red" font-size="10">X</text>
        </svg>
        <p v-for="(p, i) in paragraphs" :key="i" :class="p.c">{{ p.t }}</p>
        <ol><li><span>1.</span><div>Нагрузки и воздействия на здания и сооружения/ Гордеев В.Н., <u>Лантух</u>-Лященко</div></li></ol>
      </article>
    </main>

    <footer class="word-status">
      <span>СТРАНИЦА 33 ИЗ 33</span>
      <span>ЧИСЛО СЛОВ: 5353</span>
      <svg width="18" height="16" viewBox="0 0 18 16"><path d="M8 14H1V1h7l1 2v12M9 3l2-2h6M17 10v4h-7M11 4l5 6M16 4l-5 6" fill="none" stroke="#fff" /></svg>
      <span>РУССКИЙ</span>
      <div class="views">
        <button><svg width="16" height="14"><path d="M8 2v12M1 1h6l1 1 1-1h6v11H9l-1 1-1-1H1zM3 4h3M3 6h3M3 9h3M10 4h3M10 6h3M10 9h3" fill="none" stroke="#fff" /></svg></button>
        <button class="pressed"><svg width="16" height="14"><path d="M1 1h13v12H1zM3 4h9M3 6h9M3 8h9M3 10h9" fill="none" stroke="#fff" /></svg></button>
        <button><svg width="16" height="14"><path d="M7 11H1V1h11v4M3 3h7M3 5h7M3 8h4" fill="none" stroke="#fff" /><circle cx="11" cy="9" r="4" fill="#cfdcf0" /></svg></button>
      </div>
      <label class="zoom"><b>−</b><input v-model="zoom" type="range" min="10" max="190" /><b>+</b><span>{{ zoom }}%</span></label>
    </footer>

    <footer class="taskbar">
      <button class="start"><svg width="20" height="20"><path d="M0 3l8-1v7H0zM9 2l11-2v9H9zM0 10h8v8l-8-1zM9 10h11v10L9 18z" fill="#fff" /></svg></button>
      <label class="search">
        <svg width="22" height="22"><circle cx="13" cy="8" r="6" fill="none" stroke="#222" stroke-width="1.5" /><path d="M8 13l-7 8" stroke="#222" stroke-width="1.5" /></svg>
        <input type="text" placeholder="Введите здесь текст для поиска" />
      </label>
      <button class="taskview"><svg width="20" height="22"><path d="M1 1v3h11V1M1 7h11v8H1zM1 21v-3h11v3M18 1v5M18 10v11" fill="none" stroke="#fff" stroke-width="1.5" /><path d="M16 6h4v4h-4z" fill="#fff" /></svg></button>
      <button v-for="(a, i) in apps" :key="i" class="app" :class="a.on"><svg width="28" height="28" v-html="a.i"></svg></button>
      <div class="tray">
        <svg width="18" height="10"><path d="M1 9l8-8 8 8" fill="none" stroke="#fff" stroke-width="1.5" /></svg>
        <svg width="20" height="14"><path d="M3 3h15v10H6V8M3 1v6M0 4h5" fill="none" stroke="#fff" /><path d="M7 5h9v6H7zM18 6h2v4h-2z" fill="#fff" /></svg>
        <svg width="16" height="16"><path d="M1 15C1 7 7 1 15 1M4 15C4 9 9 4 15 4M7 15c0-4 4-8 8-8M10 15c0-3 2-5 5-5" fill="none" stroke="#ccc" /><circle cx="14" cy="14" r="2" fill="#fff" /></svg>
        <span>ENG</span>
        <div class="clock"><span>10:51</span><span>06.02.2020</span></div>
        <div class="notice">
          <svg width="20" height="20"><path d="M0 0h20v15h-6l-5 5v-5H0z" fill="#fff" /><path d="M4 4h12M4 7h12M4 11h12" stroke="#223" /></svg>
          <b>3</b>
        </div>
      </div>
      <i class="peek"></i>
    </footer>

    <div class="scad">
      <div class="scad-title">
        <svg width="20" height="21" v-html="scad"></svg>
        <span>SCAD++ (32-бит) - [C:\SDATA\Ст.неопр. рама.SPR*]</span>
        <div class="sys">
          <button><svg width="14" height="14"><path d="M1 7h12" stroke="#888" /></svg></button>
          <button><svg width="14" height="14"><path d="M1 1h11v11H1z" fill="none" stroke="#888" /></svg></button>
          <button><svg width="14" height="14"><path d="M1 1l12 12M13 1L1 13" stroke="#888" /></svg></button>
        </div>
      </div>
      <div class="scad-menu">
        <svg width="18" height="18" viewBox="0 0 21 21" v-html="scad"></svg>
        <button v-for="m in menu" :key="m">{{ m }}</button>
        <svg width="20" height="14"><path d="M4 7C8 0 18 1 17 8c0 3-2 4-4 5" fill="none" stroke="#a0a0a0" stroke-width="3" /><path d="M0 2v9h9z" fill="#a0a0a0" /></svg>
        <svg width="20" height="14"><path d="M16 7C12 0 2 1 3 8c0 3 2 4 4 5" fill="none" stroke="#a0a0a0" stroke-width="3" /><path d="M20 2v9h-9z" fill="#a0a0a0" /></svg>
        <div class="child">
          <button><svg width="12" height="12"><path d="M2 10h7" stroke="#5f7288" stroke-width="2" /></svg></button>
          <button><svg width="12" height="12"><path d="M1 5h6v6H1zM4 4V1h7v6H8" fill="none" stroke="#5f7288" stroke-width="1.5" /></svg></button>
          <button><svg width="12" height="12"><path d="M2 2l8 8M10 2l-8 8" stroke="#5f7288" stroke-width="3" /></svg></button>
        </div>
      </div>
      <div class="tool-panel">
        <div class="tools">
          <button v-for="(t, i) in tools" :key="i"><svg width="28" height="28" v-html="t"></svg></button>
        </div>
        <i></i>
        <button class="final"><svg width="28" height="28"><path d="M4 14l6 9L24 6l-3-1-10 10-4-5z" fill="#9c9c9c" /></svg></button>
        <button class="final"><svg width="28" height="28"><path d="M5 4l17 19M23 4L6 22" stroke="#9c9c9c" stroke-width="3" /></svg></button>
      </div>
      <div class="scad-tabs">
        <button v-for="t in scadTabs" :key="t" :class="{ current: tab == t }" @click="tab = t">{{ t }}</button>
      </div>
      <div class="work">
        <div class="palette main-palette">
          <div class="grip"></div>
          <div class="cells">
            <button v-for="(p, i) in left" :key="i" :class="{ pressed: leftActive.includes(i) }"><svg width="29" height="29" v-html="p"></svg></button>
          </div>
        </div>
        <div class="palette view-palette">
          <div class="grip"></div>
          <div class="cells">
            <button v-for="(p, i) in middle" :key="i"><svg width="21" height="21" viewBox="0 0 28 28" v-html="p"></svg></button>
          </div>
        </div>
        <div class="mdi">
          <div class="frame"><div class="canvas"></div></div>
          <div class="doc-tabs">
            <button><svg width="17" height="17" viewBox="0 0 21 21" v-html="scad"></svg>Ст.неопр.р...</button>
            <button class="current"><svg width="17" height="17" viewBox="0 0 21 21" v-html="scad"></svg>Ст.неопр. р...</button>
          </div>
        </div>
        <div class="palette right-palette">
          <div class="grip"></div>
          <div class="cells">
            <button v-for="(p, i) in right" :key="i" :class="{ pressed: i == 10 }"><svg width="28" height="28" v-html="p"></svg></button>
          </div>
        </div>
      </div>
      <div class="scad-status">
        <button><svg width="20" height="18"><path d="M1 5h4V2h9v3h5v9h-5v2H5v-2H1z" fill="#a6a6a6" /></svg></button>
        <button><svg width="20" height="18"><path d="M4 12h4v4H4zM13 2h4v4h-4zM8 11l5-5" fill="#a6a6a6" stroke="#a6a6a6" /></svg></button>
        <button><svg width="20" height="18"><path d="M2 2h12v14H2zM8 2v14M2 9h12" fill="none" stroke="#a6a6a6" stroke-width="2" /><path d="M17 2v5M17 10v6" stroke="#a6a6a6" stroke-width="2" /></svg></button>
        <span class="hint">Назначение жесткостей стержням</span>
        <span class="count">Узлов 8(0) Элементов 8(0)</span>
        <span class="blank"></span>
        <span class="resize"><svg width="12" height="12"><path d="M9 1h2v2H9zM5 5h2v2H5zM9 5h2v2H9zM1 9h2v2H1zM5 9h2v2H5zM9 9h2v2H9z" fill="#bbb" /></svg></span>
      </div>
    </div>

    <svg class="node n1" width="14" height="8"><path d="M2 4h12" stroke="#555" /><path d="M0 2h5v5H0z" fill="#00f" /></svg>
    <svg class="node n2" width="6" height="8"><path d="M0 3h5v5H0z" fill="#00f" /><path d="M3 0v2" stroke="#555" /></svg>
    <svg class="node n3" width="6" height="8"><path d="M0 3h5v5H0z" fill="#00f" /><path d="M3 0v2" stroke="#555" /></svg>

    <form class="dialog" @submit.prevent>
      <div class="dialog-title">
        <svg width="18" height="19" viewBox="0 0 20 21" v-html="scad"></svg>
        <span>Связи</span>
        <button type="button"><svg width="14" height="14"><path d="M1 1l12 12M13 1L1 13" stroke="#111" stroke-width="1.2" /></svg></button>
      </div>
      <div class="dialog-top">
        <fieldset class="directions">
          <legend>Направления связей</legend>
          <div class="checks">
            <label v-for="l in links" :key="l.n"><input v-model="l.on" type="checkbox" />{{ l.n }}</label>
          </div>
        </fieldset>
        <div class="side">
          <button type="button" @click="setAll(true)">Установить все</button>
          <button type="button" @click="setAll(false)">Отключить все</button>
        </div>
      </div>
      <div class="dialog-bottom">
        <fieldset class="operation">
          <legend>Вид операции</legend>
          <label><input v-model="mode" type="radio" value="add" />Добавить направления к существующим</label>
          <label><input v-model="mode" type="radio" value="replace" />Полная замена</label>
        </fieldset>
        <div class="actions">
          <button class="ok"><svg width="22" height="20"><path d="M1 9l5-2 3 6L19 1h2L9 19z" fill="#0bb515" stroke="#067a0c" /></svg><span>OK</span></button>
          <button type="button"><svg width="22" height="20"><path d="M2 2l4-1 5 6 5-6h3l-6 9 6 9h-4l-5-6-5 6H1l7-9z" fill="#b01010" stroke="#7a0606" /></svg><span>Отмена</span></button>
          <button type="button"><svg width="22" height="20"><path d="M1 11L9 1l12 4-8 11z" fill="#7b3a9a" stroke="#4b1d66" /><path d="M1 11l12 5 8-11v3l-8 11-11-5z" fill="#ddd" stroke="#4b1d66" /><text x="8" y="11" font-size="10" font-weight="bold" fill="#ffcf3a">?</text></svg><span>Справка</span></button>
        </div>
      </div>
    </form>
  </div>
</template>

<style>
body {
  background: #fff;
  overflow: hidden;
}
</style>

<style scoped>
* {
  box-sizing: border-box;
}

.screen {
  display: flex;
  flex-direction: column;
  width: 100%;
  height: 100vh;
  position: relative;
  overflow: hidden;
  font-family: 'Open Sans', 'Noto Sans', sans-serif;
  font-size: 14px;
  color: #444;
  background: #fff;
}

button {
  border: 0;
  margin: 0;
  padding: 0;
  background: none;
  font: inherit;
  color: inherit;
  white-space: nowrap;
}

svg {
  display: block;
  flex: none;
}

.caption {
  display: flex;
  height: 29px;
}

.quick {
  width: 164px;
  display: flex;
  align-items: center;
  gap: 13px;
  padding: 0 0 3px 9px;
}

.red {
  width: 797px;
  background: #eb1010;
  border-bottom: 1px solid #b90d0d;
  color: #fff;
  line-height: 28px;
  text-align: center;
}

.rest {
  flex: 1;
  width: auto;
}

.picture-tools {
  width: 154px;
  background: #faeef6;
  border-top: 4px solid #cb5599;
  color: #a0367a;
  font-size: 12px;
  line-height: 22px;
  text-align: center;
  white-space: nowrap;
}

.word-buttons {
  width: 166px;
  display: flex;
  align-items: center;
  justify-content: space-between;
  padding: 0 10px 3px 12px;
  color: #bbb;
}

.ribbon-tabs {
  display: flex;
  height: 30px;
  border-bottom: 1px solid #d4d4d4;
}

.ribbon-tabs button {
  padding: 0 16px;
  height: 29px;
}

.ribbon-tabs .file {
  width: 73px;
  height: 30px;
  background: #2b579a;
  color: #fff;
}

.ribbon-tabs .current {
  margin-left: 4px;
  width: 93px;
  height: 30px;
  padding: 0;
  color: #2b579a;
  background: #fff;
  border: 1px solid #d4d4d4;
  border-bottom: 0;
}

.ribbon-tabs .format {
  width: 154px;
  margin-left: 3px;
  background: #faeef6;
}

.signin {
  margin-left: auto;
  line-height: 26px;
  color: #444;
  text-decoration: none;
}

.ribbon {
  display: flex;
  height: 112px;
  border-bottom: 1px solid #d0d0d0;
}

.group {
  display: flex;
  flex-direction: column;
  padding-top: 3px;
  margin-bottom: 6px;
  border-right: 1px solid #dcdcdc;
}

.group .body {
  display: flex;
  flex: none;
  height: 84px;
}

.group > footer {
  position: relative;
  padding-right: 19px;
  text-align: center;
  font-size: 12px;
  line-height: 26px;
  color: #666;
}

.launch {
  position: absolute;
  right: 6px;
  top: 10px;
  width: 7px;
  height: 7px;
  border-left: 1px solid #777;
  border-top: 1px solid #777;
}

.launch::after {
  content: '';
  position: absolute;
  right: 0;
  bottom: 0;
  border: 2px solid #777;
  border-left-color: transparent;
  border-top-color: transparent;
}

.clipboard {
  width: 246px;
}

.paste {
  display: flex;
  flex-direction: column;
  align-items: center;
  width: 72px;
  padding-top: 4px;
  line-height: 24px;
}

.clip-list {
  display: flex;
  flex-direction: column;
}

.clip-list button {
  display: flex;
  align-items: center;
  gap: 4px;
  height: 28px;
}

.font {
  width: 315px;
}

.group .rows {
  flex-direction: column;
  gap: 9px;
  padding: 10px 0 0 4px;
}

.row {
  display: flex;
  height: 28px;
}

.combo {
  position: relative;
  height: 27px;
  border: 1px solid #ababab;
}

.combo select {
  width: 100%;
  height: 25px;
  border: 0;
  padding: 0 2px;
  appearance: none;
  background: #fff;
  font: inherit;
  color: #111;
}

.combo::after {
  content: '';
  position: absolute;
  right: 4px;
  top: 11px;
  border: 3px solid transparent;
  border-top: 4px solid #777;
}

.face {
  width: 104px;
}

.size {
  width: 68px;
}

.para {
  width: 256px;
}

.pressed {
  background: #c2d5f2;
}

.styles {
  flex: 1;
}

.gallery {
  flex: 1;
  display: grid;
  grid-template-columns: repeat(10, 1fr) 17px;
  height: 75px;
  margin: 3px 6px 0 5px;
  border: 1px solid #ababab;
}

.gallery button {
  display: flex;
  flex-direction: column;
  align-items: center;
  min-width: 0;
  overflow: hidden;
  border: 4px solid transparent;
  color: #666;
}

.gallery .chosen {
  border-color: #c2d5f2;
}

.sample {
  width: 76px;
  height: 40px;
  line-height: 44px;
  overflow: hidden;
  text-align: left;
  color: #111;
  font-size: 15px;
}

.style-name {
  line-height: 24px;
}

.s-serif {
  font-family: 'Liberation Serif', serif;
  font-size: 18px;
}

.s-h1 {
  font-size: 22px;
  font-weight: 300;
  color: #2e74b5;
}

.s-h2 {
  font-size: 18px;
  font-weight: 300;
  color: #2e74b5;
}

.s-h3 {
  font-size: 16px;
  color: #1f4e79;
}

.s-h4 {
  font-style: italic;
  color: #2e74b5;
}

.s-title {
  font-size: 38px;
  font-weight: 300;
  line-height: 34px;
}

.s-sub {
  color: #5a5a5a;
}

.s-weak {
  font-style: italic;
  color: #404040;
}

.scroll {
  display: grid;
  border-left: 1px solid #ababab;
}

.scroll span {
  display: flex;
  align-items: center;
  justify-content: center;
}

.scroll span + span {
  border-top: 1px solid #ababab;
}

.edit {
  width: 120px;
}

.edit > footer {
  padding-right: 0;
}

.edit .body {
  padding-left: 9px;
}

.collapse {
  width: 12px;
  margin: 96px 11px 0 29px;
}

.document {
  flex: 1;
  min-height: 0;
  overflow: hidden;
  padding: 8px 23px 0 0;
  background: linear-gradient(#fdfdfd, #ececec);
}

.page {
  display: flow-root;
  width: 992px;
  height: 1000px;
  margin: 0 auto;
  padding: 152px 0 0 141px;
  background: #fff;
  border: 1px solid #c6c6c6;
  font: 19px/35px 'Liberation Serif', serif;
  color: #000;
  white-space: nowrap;
}

.page svg {
  font-family: 'Liberation Sans', sans-serif;
}

.scheme {
  margin: 0 0 -57px 101px;
  overflow: visible;
}

.axes {
  margin-left: 69px;
}

.page p {
  margin: 0;
}

.page p:first-of-type {
  margin-top: 15px;
}

.page .indent {
  padding-left: 59px;
}

.page .wide {
  margin-bottom: 41px;
}

.page .after {
  margin-bottom: 6px;
}

.page ol {
  margin: 134px 0 0;
  padding-left: 30px;
  list-style: none;
  font-size: 20px;
}

.page li {
  display: flex;
}

.page li span {
  width: 29px;
}

.page u {
  text-decoration: underline wavy red 1px;
}

.word-status {
  display: flex;
  align-items: center;
  height: 27px;
  padding: 0 0 1px 8px;
  gap: 18px;
  background: #2b579a;
  color: #fff;
  font-size: 13px;
}

.views {
  display: flex;
  margin-left: auto;
}

.views button {
  display: flex;
  align-items: center;
  justify-content: center;
  width: 42px;
  height: 26px;
}

.views .pressed {
  background: #1b478a;
}

.zoom {
  display: flex;
  align-items: center;
  margin-left: -15px;
  gap: 3px;
  padding-right: 8px;
}

.zoom b {
  font-size: 20px;
  line-height: 20px;
}

.zoom span {
  margin-left: 12px;
}

.zoom input {
  appearance: none;
  width: 126px;
  height: 1px;
  margin: 0;
  background: #fff;
}

.zoom input::-webkit-slider-thumb {
  appearance: none;
  width: 5px;
  height: 13px;
  background: #fff;
}

.taskbar {
  display: flex;
  height: 50px;
  background: linear-gradient(90deg, #22393f, #1f2f3f 60%, #1a243b);
  color: #fff;
}

.taskbar button {
  display: flex;
  align-items: center;
  justify-content: center;
}

.start {
  width: 60px;
}

.search {
  display: flex;
  align-items: center;
  width: 430px;
  gap: 13px;
  padding-left: 14px;
  background: #f2f2f2;
  border: 1px solid #b4b4b4;
}

.search input {
  flex: 1;
  border: 0;
  padding: 0;
  background: none;
  font: inherit;
  font-size: 18px;
}

.search input::placeholder {
  color: #333;
}

.taskview {
  width: 62px;
}

.app {
  width: 62px;
  border-bottom: 3px solid transparent;
}

.app.on {
  background: linear-gradient(#a6d8f8, #a6d8f8) center bottom / 52px 3px no-repeat;
  background-origin: border-box;
}

.taskbar .active {
  background: #53626c;
  border-bottom-color: #a6d8f8;
}

.tray {
  display: flex;
  align-items: center;
  margin-left: auto;
  gap: 13px;
  padding-right: 25px;
}

.clock {
  display: flex;
  flex-direction: column;
  align-items: center;
  line-height: 23px;
}

.notice {
  position: relative;
  margin-left: 9px;
}

.notice b {
  position: absolute;
  left: 9px;
  top: 9px;
  width: 21px;
  height: 21px;
  border: 1px solid #888;
  border-radius: 50%;
  background: #2c2f33;
  font-size: 12px;
  line-height: 19px;
  text-align: center;
}

.peek {
  width: 6px;
  border-left: 1px solid #6b7480;
}

.scad {
  position: absolute;
  left: 714px;
  top: 176px;
  width: 1111px;
  height: 788px;
  display: flex;
  flex-direction: column;
  background: #f0f0f0;
  border: 1px solid #999;
  box-shadow: 0 4px 20px rgba(0, 0, 0, 0.4);
}

.scad-title {
  display: flex;
  align-items: center;
  height: 39px;
  padding: 0 0 2px 9px;
  gap: 6px;
  background: #fff;
  border-bottom: 1px solid #ddd;
  color: #999;
  font-size: 15px;
}

.sys {
  display: flex;
  margin-left: auto;
}

.sys button {
  width: 59px;
  display: flex;
  justify-content: center;
}

.scad-menu {
  display: flex;
  align-items: center;
  height: 38px;
  padding: 0 5px 0 10px;
  gap: 13px;
  border-bottom: 2px solid #bbb;
  color: #111;
}

.scad-menu > svg:first-child {
  margin-right: -7px;
}

.child {
  display: flex;
  margin-left: auto;
  gap: 4px;
}

.child button {
  display: flex;
  align-items: center;
  justify-content: center;
  width: 22px;
  height: 21px;
  background: #fff;
  border: 1px solid #e2e2e2;
}

.tool-panel {
  display: flex;
  height: 109px;
  margin: 1px 4px 0 3px;
  padding: 13px 0 0 10px;
  border-top: 3px solid #fff;
  border-left: 2px solid #fff;
  border-right: 2px solid #333;
  border-bottom: 2px solid #444;
}

.tools {
  display: grid;
  grid-template-columns: repeat(24, 1fr);
  width: 931px;
  height: 28px;
}

.tools button,
.final {
  display: flex;
  justify-content: center;
}

.tool-panel > i {
  width: 2px;
  height: 38px;
  margin: -5px 4px 0 6px;
  background: #aaa;
}

.final {
  width: 39px;
}

.scad-tabs {
  display: flex;
  align-items: flex-start;
  height: 42px;
  padding-left: 18px;
  margin-top: -2px;
  font-family: 'Liberation Sans', sans-serif;
  font-size: 15px;
  font-weight: bold;
  color: #a0a0a0;
  border-bottom: 3px solid #888;
  text-shadow: 1px 1px #fff;
}

.scad-tabs button {
  height: 28px;
  padding: 0 7px;
  border: 1px solid #aaa;
  border-left-color: #fff;
  border-top: 2px solid #444;
  border-bottom: 2px solid #222;
  border-radius: 0 0 4px 4px;
}

.scad-tabs .current {
  height: 32px;
  border-top-color: #f0f0f0;
  border-right: 2px solid #333;
}

.scad-tabs button:last-child {
  border-right: 2px solid #333;
}

.work {
  flex: 1;
  display: flex;
  align-items: flex-start;
  min-height: 0;
  background: #fff;
}

.palette {
  padding: 3px;
  background: #f0f0f0;
  border-right: 2px solid #aaa;
  border-bottom: 2px solid #aaa;
}

.grip {
  height: 8px;
  border-top: 2px solid #c0c0c0;
  border-bottom: 2px solid #c0c0c0;
}

.cells {
  display: grid;
}

.cells button {
  display: flex;
  align-items: center;
  justify-content: center;
  min-width: 0;
  min-height: 0;
}

.cells .pressed {
  background: #bfdcf3;
  border: 1px solid #99ccf5;
}

.main-palette {
  width: 164px;
  height: 524px;
}

.main-palette .cells {
  grid-template: repeat(13, 1fr) / repeat(4, 1fr);
  width: 155px;
  height: 504px;
}

.view-palette {
  width: 67px;
  height: 308px;
}

.view-palette .cells {
  grid-template: repeat(10, 1fr) / repeat(2, 1fr);
  width: 58px;
  height: 287px;
}

.mdi {
  flex: 1;
  align-self: stretch;
  display: flex;
  flex-direction: column;
  margin-left: 3px;
  padding: 11px 6px 0 10px;
  background: #f0f0f0;
  border-right: 2px solid #bbb;
  border-top: 1px solid #bbb;
}

.frame {
  flex: 1;
  padding: 3px 6px 5px 3px;
  border-left: 2px solid #fff;
  border-top: 2px solid #fff;
  border-right: 3px solid #333;
  border-bottom: 3px solid #333;
}

.canvas {
  height: 100%;
  background: #fff;
  border: 8px double #888;
  border-left-width: 10px;
  border-right: 3px solid #eee;
  border-bottom: 3px solid #888;
}

.doc-tabs {
  display: flex;
  align-items: flex-start;
  height: 33px;
  padding-left: 5px;
  font: 13px 'Liberation Sans', sans-serif;
  color: #111;
}

.doc-tabs button {
  display: flex;
  align-items: center;
  gap: 4px;
  width: 111px;
  height: 26px;
  padding-left: 5px;
  border-bottom: 2px solid #333;
  border-left: 1px solid #fff;
  border-radius: 0 0 3px 3px;
}

.doc-tabs .current {
  height: 29px;
  width: 115px;
  border-right: 2px solid #333;
}

.right-palette {
  width: 127px;
  height: 485px;
}

.right-palette .cells {
  grid-template: repeat(12, 1fr) / repeat(3, 1fr);
  width: 117px;
  height: 466px;
}

.scad-status {
  display: flex;
  align-items: center;
  height: 24px;
  border-top: 2px solid #ddd;
  color: #222;
}

.scad-status button {
  width: 25px;
  height: 21px;
  margin-right: 2px;
  padding-left: 1px;
  border-right: 2px solid #aaa;
  border-bottom: 2px solid #aaa;
}

.hint {
  padding-left: 4px;
  color: red;
}

.count {
  width: 285px;
  margin-left: auto;
  padding-left: 4px;
  border-left: 1px solid #ccc;
}

.blank {
  width: 85px;
  height: 20px;
  border-left: 1px solid #ccc;
}

.resize {
  width: 25px;
  height: 20px;
  padding: 8px 0 0 11px;
  border-left: 1px solid #ccc;
}

.node {
  position: absolute;
}

.n1 {
  left: 1020px;
  top: 601px;
}

.n2 {
  left: 1223px;
  top: 804px;
}

.n3 {
  left: 1426px;
  top: 804px;
}

.dialog {
  position: absolute;
  left: 1033px;
  top: 493px;
  width: 677px;
  height: 313px;
  display: flex;
  flex-direction: column;
  background: #f0f0f0;
  border: 1px solid #555;
  box-shadow: 0 3px 20px rgba(0, 0, 0, 0.4);
  font-family: 'Liberation Sans', sans-serif;
  color: #111;
}

.dialog-title {
  display: flex;
  align-items: center;
  height: 38px;
  padding: 0 14px 2px 12px;
  gap: 5px;
  background: #fff;
  font-family: 'Open Sans', 'Noto Sans', sans-serif;
}

.dialog-title button {
  margin-left: auto;
}

fieldset {
  margin: 0;
  padding: 0;
  border: 1px solid #dcdcdc;
}

legend {
  line-height: 16px;
  padding: 0 2px;
}

.dialog-top {
  display: flex;
  justify-content: space-between;
  padding: 9px 17px 0 8px;
}

.directions {
  width: 517px;
  height: 122px;
  padding-left: 9px;
}

.checks {
  display: flex;
  margin: 8px 0 0 1px;
}

.checks label {
  display: flex;
  align-items: center;
  justify-content: center;
  gap: 6px;
  width: 81px;
  height: 21px;
  background: #fff;
  border-right: 1px solid #aaa;
  border-bottom: 1px solid #aaa;
}

.checks input {
  appearance: none;
  position: relative;
  width: 16px;
  height: 16px;
  margin: 0;
  background: #b5b5b5;
  border: 2px solid #d4d4d4;
  border-right-color: #888;
  border-bottom-color: #888;
}

.checks input:checked::before {
  content: '';
  position: absolute;
  left: 1px;
  top: -1px;
  width: 12px;
  height: 12px;
  background: red;
  clip-path: polygon(0 35%, 25% 35%, 38% 60%, 85% 0, 100% 0, 42% 100%, 30% 100%);
}

.side {
  display: flex;
  flex-direction: column;
  gap: 10px;
  padding-top: 7px;
}

.side button {
  width: 116px;
  height: 31px;
}

.side button,
.actions button {
  border: 1px solid #fff;
  border-right: 2px solid #aaa;
  border-bottom: 2px solid #aaa;
}

.dialog-bottom {
  display: flex;
  justify-content: space-between;
  align-items: flex-end;
  margin-top: 22px;
  padding: 0 18px 0 10px;
}

.operation {
  width: 338px;
  height: 105px;
}

.operation legend {
  margin: 0 0 4px 9px;
}

.operation label {
  display: flex;
  align-items: center;
  gap: 5px;
  height: 36px;
  padding-left: 4px;
}

.operation input {
  appearance: none;
  width: 17px;
  height: 17px;
  margin: 0;
  border: 1px solid #333;
  border-radius: 50%;
  background: #fff;
}

.operation input:checked {
  background: #222;
  box-shadow: inset 0 0 0 3px #fff;
}

.actions {
  display: flex;
  gap: 5px;
}

.actions button {
  display: flex;
  align-items: center;
  width: 95px;
  height: 29px;
  padding-left: 2px;
}

.actions span {
  flex: 1;
  text-align: center;
}

.actions .ok {
  width: 91px;
  margin-right: 7px;
  border: 1px solid #888;
}
</style>
